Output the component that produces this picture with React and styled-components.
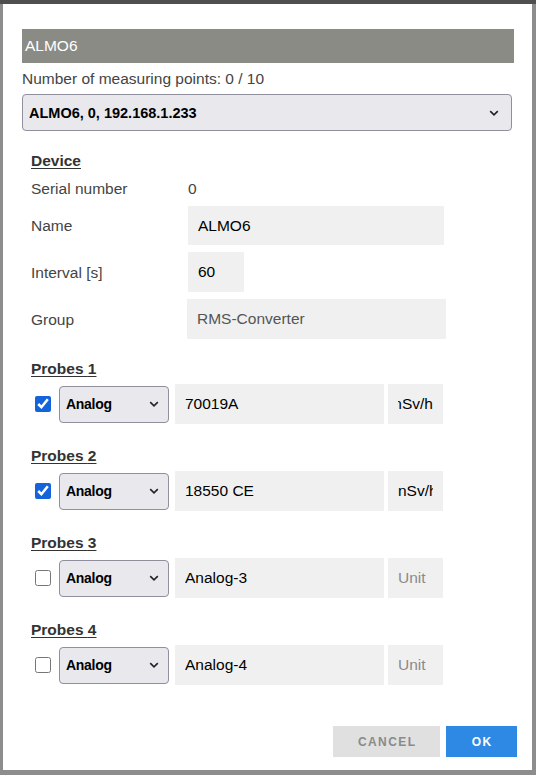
import React from 'react';
import styled, { createGlobalStyle } from 'styled-components';

const GlobalStyle = createGlobalStyle`
  html, body {
    margin: 0;
    padding: 0;
  }
  body {
    font-family: "Liberation Sans", Arial, sans-serif;
    background: #8d8d8d;
  }
`;

const Backdrop = styled.div`
  width: 536px;
  height: 775px;
  box-sizing: border-box;
  padding: 4px 4px 5px 3px;
  background: linear-gradient(#4f4f4f 0 4px, #8d8d8d 4px);
`;

const Dialog = styled.div`
  height: 100%;
  box-sizing: border-box;
  background: #fff;
  padding: 25px 17px 13px 19px;
  display: flex;
  flex-direction: column;
`;

const TitleBar = styled.div`
  height: 34px;
  line-height: 34px;
  padding-left: 3px;
  margin-right: 1px;
  background: #8b8b86;
  color: #fff;
  font-size: 15.5px;
`;

const Count = styled.div`
  margin-top: 6px;
  line-height: 20px;
  font-size: 15.5px;
  color: #444;
`;

const SelectWrap = styled.div`
  position: relative;
  flex: none;
  width: ${(p) => (p.$width ? `${p.$width}px` : 'auto')};
  height: ${(p) => p.$height}px;
  ${(p) => (p.$margin ? `margin: ${p.$margin};` : '')}
`;

const Select = styled.select`
  appearance: none;
  display: block;
  width: 100%;
  height: 100%;
  box-sizing: border-box;
  border: 1px solid #8f8f9d;
  border-radius: 4px;
  background: #e9e9ed;
  color: #000;
  font-family: inherit;
  font-weight: bold;
  font-size: ${(p) => p.$size}px;
  letter-spacing: ${(p) => p.$tracking || 0}px;
  padding: 0 24px 0 ${(p) => p.$pad}px;
  outline: none;
`;

const Chevron = styled.svg`
  position: absolute;
  right: ${(p) => p.$right}px;
  top: 50%;
  margin-top: -3px;
  pointer-events: none;
`;

const Dropdown = ({ value, width, height, size, tracking, pad, right, margin }) => (
  <SelectWrap $width={width} $height={height} $margin={margin}>
    <Select $size={size} $tracking={tracking} $pad={pad} defaultValue={value}>
      <option value={value}>{value}</option>
    </Select>
    <Chevron $right={right} width="10" height="6" viewBox="0 0 10 6">
      <path d="M1.2 1.2 L5 4.8 L8.8 1.2" fill="none" stroke="#222" strokeWidth="1.6" />
    </Chevron>
  </SelectWrap>
);

const Body = styled.div`
  padding-left: 9px;
  display: flex;
  flex-direction: column;
`;

const SectionTitle = styled.div`
  margin-top: ${(p) => p.$top}px;
  line-height: 18px;
  font-size: 15.5px;
  font-weight: bold;
  color: #333;
  text-decoration: underline;
  text-underline-offset: 2px;
`;

const InfoGrid = styled.div`
  display: grid;
  grid-template-columns: 157px auto;
  row-gap: 7px;
  align-items: center;
  justify-items: start;
  margin-top: 8px;
`;

const Label = styled.div`
  line-height: 21px;
  font-size: 15.5px;
  color: #444;
`;

const TextInput = styled.input`
  box-sizing: border-box;
  width: ${(p) => p.$width}px;
  height: ${(p) => p.$height || 39}px;
  padding: 0 10px;
  border: none;
  outline: none;
  background: #f0f0f0;
  font-family: inherit;
  font-size: 15.5px;
  color: ${(p) => p.$color || '#000'};
  ${(p) => (p.$shift ? `margin-left: ${p.$shift}px;` : '')}
`;

const ProbeRow = styled.div`
  display: flex;
  align-items: center;
  height: 40px;
  margin-top: 6px;
`;

const Check = styled.input`
  width: 16px;
  height: 16px;
  margin: 0 8px 0 4px;
  accent-color: #1463db;
`;

const UnitField = styled.div`
  box-sizing: border-box;
  width: 55px;
  height: 40px;
  margin-left: 4px;
  padding: 0 10px;
  background: #f0f0f0;
  display: flex;
  align-items: center;
`;

const UnitText = styled.span`
  display: block;
  width: 100%;
  overflow: hidden;
  white-space: nowrap;
  font-size: 15.5px;
  color: ${(p) => (p.$empty ? '#8a8a8a' : '#000')};
  direction: ${(p) => (p.$scrolled ? 'rtl' : 'ltr')};
`;

const Footer = styled.div`
  margin-top: auto;
  margin-right: -2px;
  display: flex;
  justify-content: flex-end;
  gap: 6px;
`;

const Button = styled.button`
  width: ${(p) => p.$width}px;
  height: 31px;
  border: none;
  padding: 0 0 0 1.4px;
  font-family: inherit;
  font-size: 12px;
  font-weight: bold;
  letter-spacing: 1.4px;
  background: ${(p) => (p.$primary ? '#2e89e5' : '#e0e0e0')};
  color: ${(p) => (p.$primary ? '#fff' : '#8a8a8a')};
`;

const probes = [
  { id: 1, on: true, name: '70019A', unit: 'nSv/h', scrolled: true },
  { id: 2, on: true, name: '18550 CE', unit: 'nSv/h' },
  { id: 3, on: false, name: 'Analog-3' },
  { id: 4, on: false, name: 'Analog-4' },
];

const App = () => (
  <>
    <GlobalStyle />
    <Backdrop>
      <Dialog>
        <TitleBar>ALMO6</TitleBar>
        <Count>Number of measuring points: 0 / 10</Count>
        <Dropdown
          value="ALMO6, 0, 192.168.1.233"
          height={37}
          size={14.5}
          pad={6}
          right={13}
          margin="5px 3px 0 0"
        />
        <Body>
          <SectionTitle $top={21}>Device</SectionTitle>
          <InfoGrid>
            <Label>Serial number</Label>
            <Label>0</Label>
            <Label>Name</Label>
            <TextInput $width={256} defaultValue="ALMO6" />
            <Label>Interval [s]</Label>
            <TextInput $width={56} $height={40} defaultValue="60" />
            <Label>Group</Label>
            <TextInput $width={259} $height={40} $shift={-1} $color="#555" defaultValue="RMS-Converter" />
          </InfoGrid>

          {probes.map((p, i) => (
            <React.Fragment key={p.id}>
              <SectionTitle $top={i === 0 ? 21 : 23}>Probes {p.id}</SectionTitle>
              <ProbeRow>
                <Check type="checkbox" defaultChecked={p.on} />
                <Dropdown
                  value="Analog"
                  width={110}
                  height={37}
                  size={14}
                  tracking={-0.3}
                  pad={6}
                  right={10}
                />
                <TextInput $width={209} $height={40} $shift={6} defaultValue={p.name} />
                <UnitField>
                  <UnitText $empty={!p.unit} $scrolled={p.scrolled}>
                    {p.unit || 'Unit'}
                  </UnitText>
                </UnitField>
              </ProbeRow>
            </React.Fragment>
          ))}
        </Body>
        <Footer>
          <Button $width={107}>CANCEL</Button>
          <Button $width={71} $primary>OK</Button>
        </Footer>
      </Dialog>
    </Backdrop>
  </>
);

export default App;
